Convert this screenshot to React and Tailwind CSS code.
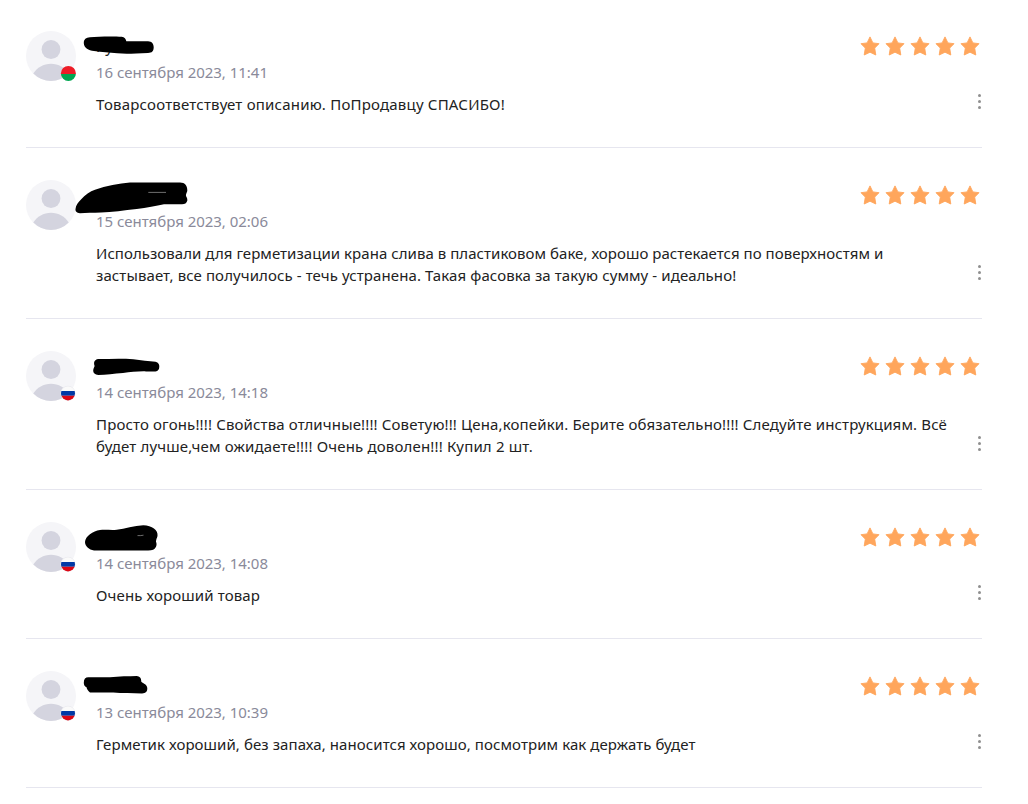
import React from "react";

const reviews = [
  {
    name: "Ку",
    country: "by",
    date: "16 сентября 2023, 11:41",
    lines: [{ text: "Товарсоответствует описанию. ПоПродавцу СПАСИБО!", width: 409 }],
    stroke:
      "M7.8 12C7.8 8.5 10 6.5 14 6.3C22 5.3 38 5.3 45.7 5.7C48.5 6 50 8 50.3 10.3H72C76 10.5 77.7 13 77.7 16.3C77.7 20 76 22 72 22C64 22.3 56 22.7 50.7 22.7C38 22 26 21.5 16 19.8C10.5 18.5 7.8 15.5 7.8 12Z",
  },
  {
    country: null,
    date: "15 сентября 2023, 02:06",
    lines: [
      {
        text: "Использовали для герметизации крана слива в пластиковом баке, хорошо растекается по поверхностям и",
        width: 787.3,
      },
      { text: "застывает, все получилось - течь устранена. Такая фасовка за такую сумму - идеально!", width: 640.3 },
    ],
    stroke:
      "M-.5 29C-.3 25 2.5 22 5 19.5C9 15 14 11.5 19 9.8C30 6 43 3.5 54 2.6H104C109 2.6 111.5 6 111.3 11C110.5 13 109.8 14.5 110 16C111 17.5 111.5 19 111.3 20.7C110.5 23 109 24.3 106 24.3H88C80 26 71 28 60.7 29C48 30.5 36 32 25 32.5C17 32.8 10 32.8 4 33.3C.5 33-.8 31-.5 29Z",
    gap: "M72.3 12.4H90",
  },
  {
    country: "ru",
    date: "14 сентября 2023, 14:18",
    lines: [
      {
        text: "Просто огонь!!!! Свойства отличные!!!! Советую!!! Цена,копейки. Берите обязательно!!!! Следуйте инструкциям. Всё",
        width: 851,
      },
      { text: "будет лучше,чем ожидаете!!!! Очень доволен!!! Купил 2 шт.", width: 437 },
    ],
    stroke:
      "M17.2 19.5C17.3 17.5 18.2 16.5 18.6 15C17.5 12 18 8.5 22.3 8C34 7.8 46 7.2 57.3 8.2C65 9.3 73 10 79.5 10.8C82.5 11.5 83.4 13.5 83.3 15.7C83.2 18.5 82 20.2 79.5 20.4H70C62 20.2 55 21 47 22C38 22.7 30 23.8 22.3 24C19 23.5 17 22 17.2 19.5Z",
  },
  {
    country: "ru",
    date: "14 сентября 2023, 14:08",
    lines: [{ text: "Очень хороший товар", width: 164 }],
    stroke:
      "M9 20C9.3 14 17 9 24 7.9C30 7.3 35 8.3 40.7 7.7C49 6.7 58 3.5 67.3 3.2C76 3.4 82.3 8 81.5 14C81 16 80 17.5 80 19.7C80.7 21.5 80.8 23 80 24.7C79 27.5 76 28.5 72.3 28.5H18C13 27.8 9 24 9 20Z",
    gap: "M61.5 13.6H64.5L67.5 13.2",
  },
  {
    country: "ru",
    date: "13 сентября 2023, 10:39",
    lines: [{ text: "Герметик хороший, без запаха, наносится хорошо, посмотрим как держать будет", width: 599.5 }],
    stroke:
      "M7.8 11.7C7.8 8 9.5 6.3 12.3 6.3H34C43 5.2 53 5.2 60.7 5C63.5 5.2 65.5 7 65.3 10.7C67.5 12.5 71.3 13.5 71.3 17.3C71.3 20.5 70 22.4 66 22.4C56 22.2 46 22.2 37.3 21.5H14C12 20 11 18 10.5 16.2C8.5 15.2 7.8 13.7 7.8 11.7Z",
  },
];

const Flag = ({ country }) => {
  const id = React.useId();

  return (
    <g>
      <clipPath id={id}>
        <circle cx={country === "by" ? 42.4 : 42} cy="42.4" r={country === "by" ? 7.5 : 7} />
      </clipPath>
      {country === "ru" && <circle cx="42" cy="42.3" r="7.5" fill="#ececf0" />}
      {country === "by" ? (
        <g clipPath={`url(#${id})`}>
          <path d="M34 34H51V43H34Z" fill="#ed1c27" />
          <path d="M34 43H51V51H34Z" fill="#00a651" />
        </g>
      ) : (
        <g clipPath={`url(#${id})`}>
          <path d="M34 34H51V40H34Z" fill="#fafafa" />
          <path d="M34 40H51V44.7H34Z" fill="#0039a6" />
          <path d="M34 44.7H51V51H34Z" fill="#dc0714" />
        </g>
      )}
    </g>
  );
};

const Avatar = ({ country }) => (
  <svg className="h-[50px] w-[50px] shrink-0 overflow-visible" viewBox="0 0 50 50">
    <circle cx="25" cy="25" r="25" fill="#f5f5f8" />
    <circle cx="25" cy="18.5" r="9.4" fill="#d4d4df" />
    <path d="M7.3 42.6C11 36.5 17.5 32.7 25 32.7S39 36.5 42.7 42.6A25 25 0 0 1 7.3 42.6Z" fill="#d4d4df" />
    {country && <Flag country={country} />}
  </svg>
);

const Star = () => (
  <svg className="h-5 w-5" viewBox="0 0 20 20" fill="#ffa65c">
    <path
      d="M10 .9L12.9 6.9L19 7.7L14.7 12.1L15.8 19L10 16.2L4.2 19L5.3 12.1L1 7.7L7.1 6.9Z"
      stroke="#ffa65c"
      strokeWidth=".9"
      strokeLinejoin="round"
    />
  </svg>
);

// Tracks a line of text out to the given width
const Line = ({ text, width }) => {
  const ref = React.useRef(null);
  const [spacing, setSpacing] = React.useState(0);

  React.useLayoutEffect(() => {
    const natural = ref.current.getBoundingClientRect().width;
    setSpacing((width - natural) / text.length);
  }, [text, width]);

  return (
    <div className="h-[22px] whitespace-nowrap">
      <span ref={ref} style={{ letterSpacing: `${spacing}px` }}>
        {text}
      </span>
    </div>
  );
};

const Review = ({ review }) => (
  <div className="flex border-b border-[#e6e6ef] pt-8 pb-8">
    <Avatar country={review.country} />

    <div className="flex flex-1 flex-col">
      <div className="flex h-[30px] justify-between">
        <div className="relative pl-5 text-[15px] leading-[31px] text-[#222]">
          {review.name}
          <svg className="absolute top-0 left-0 h-9 w-[120px] overflow-visible" viewBox="0 0 120 36">
            <path d={review.stroke} fill="#000" />
            {review.gap && <path d={review.gap} fill="none" stroke="#ddd" strokeWidth=".5" />}
          </svg>
        </div>
        <div className="mt-[5px] mr-0.5 flex h-5 gap-[5px]">
          {[1, 2, 3, 4, 5].map((n) => (
            <Star key={n} />
          ))}
        </div>
      </div>

      <div className="flex h-8 pl-5 leading-[22px] text-[#8a8a9a]">
        <Line text={review.date} width={172} />
      </div>

      <div className="flex items-end justify-between pl-5">
        <div className="leading-[22px] text-[#222]">
          {review.lines.map((line) => (
            <Line key={line.text} text={line.text} width={line.width} />
          ))}
        </div>
        <button className="mb-[6px] flex w-[5px] flex-col items-center gap-[3px]" aria-label="Меню">
          <span className="h-[3px] w-[3px] rounded-full bg-[#8f8f8f]" />
          <span className="h-[3px] w-[3px] rounded-full bg-[#8f8f8f]" />
          <span className="h-[3px] w-[3px] rounded-full bg-[#8f8f8f]" />
        </button>
      </div>
    </div>
  </div>
);

const App = () => {
  return (
    <div className="h-[804px] overflow-hidden bg-white font-['Noto_Sans',sans-serif] text-[15px]">
      <div className="-mt-px ml-[26px] w-[956px]">
        {reviews.map((review) => (
          <Review key={review.date} review={review} />
        ))}
      </div>
    </div>
  );
};

export default App;
